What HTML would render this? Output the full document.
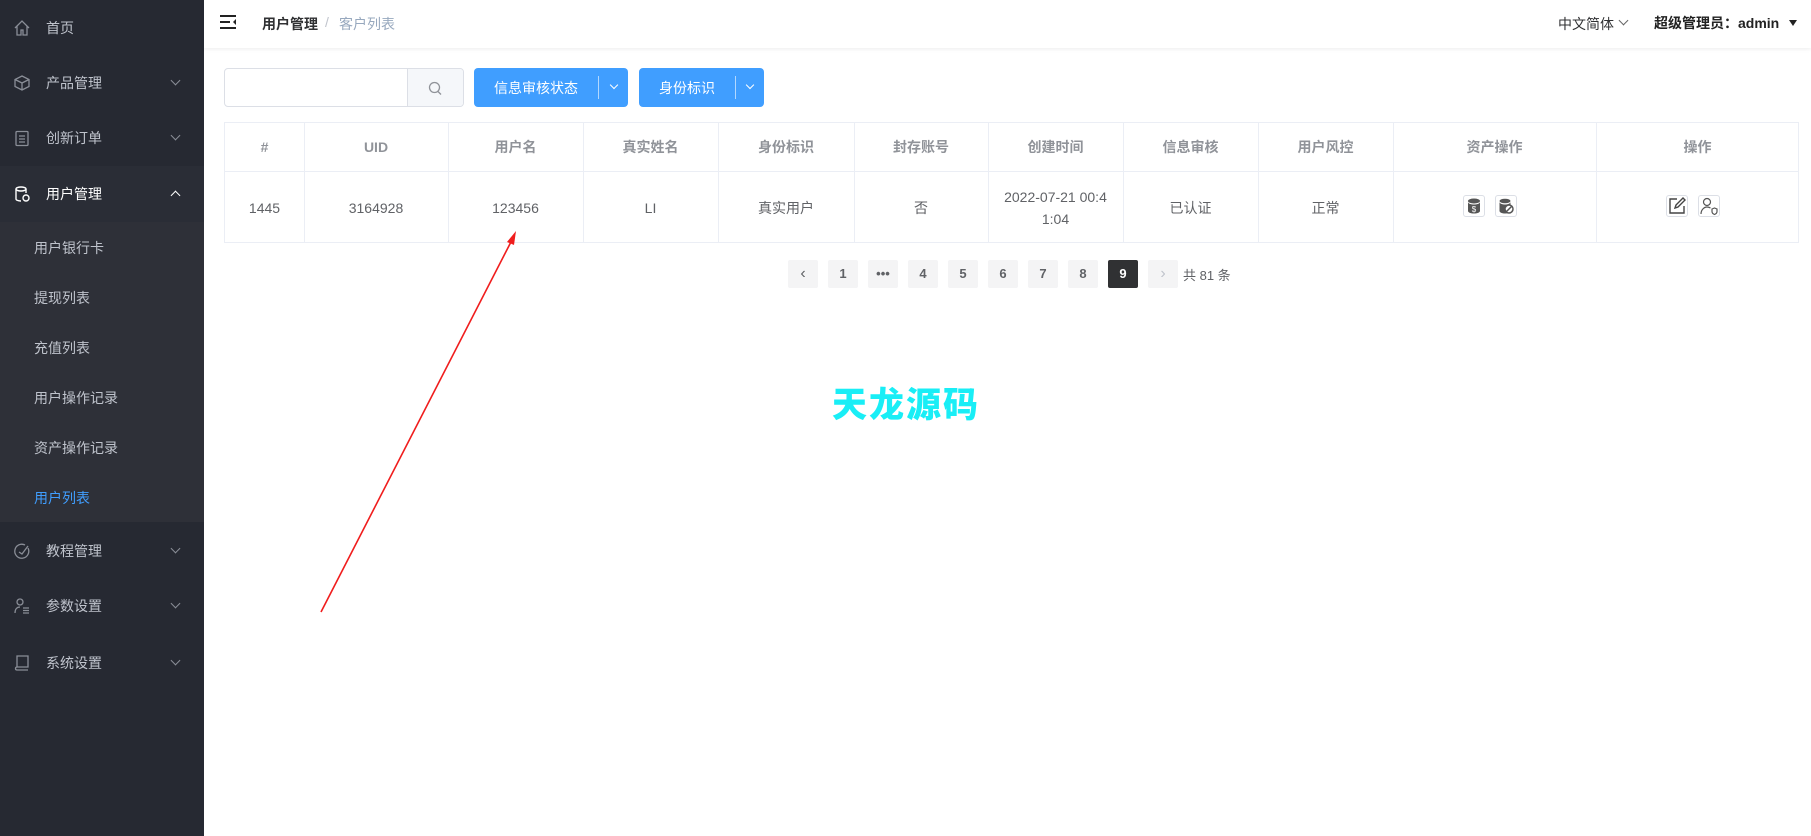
<!DOCTYPE html>
<html><head><meta charset="utf-8"><style>
*{margin:0;padding:0;box-sizing:border-box}
body{width:1811px;height:836px;overflow:hidden;background:#fff;font-family:"Liberation Sans","Noto Sans CJK SC",sans-serif;font-size:14px;color:#333;position:relative}
.side{position:absolute;left:0;top:0;width:204px;height:836px;background:#262932}
.mi{position:absolute;left:0;width:204px;height:56px;display:flex;align-items:center;color:#bfc3cc;font-size:14px}
.mi .ic{position:absolute;left:13px;top:19px;width:18px;height:18px}
.mi .t{position:absolute;left:46px}
.mi .ar{position:absolute;left:172px;top:22px;width:7px;height:7px;border-right:1px solid #8a8e97;border-bottom:1px solid #8a8e97;transform:rotate(45deg)}
.sub{position:absolute;left:0;top:222px;width:204px;height:300px;background:#2e3038}
.si{position:absolute;left:34px;color:#bfc3cc;font-size:14px}
.hdr{position:absolute;left:204px;top:0;width:1607px;height:48px;background:#fff;box-shadow:0 1px 4px rgba(0,21,41,.08)}
.ab{position:absolute}
.tbl{position:absolute;left:224px;top:122px;width:1575px;height:121px;border:1px solid #ebeef5}
.col{position:absolute;top:0;height:119px;border-left:1px solid #ebeef5}
.th,.td{position:absolute;text-align:center;font-size:14px}
.th{top:0;height:49px;line-height:49px;color:#909399;font-weight:bold}
.td{top:49px;height:71px;display:flex;align-items:center;justify-content:center;color:#606266;line-height:22px}
.hline{position:absolute;left:0;top:48px;width:1573px;border-top:1px solid #ebeef5}
.pg{position:absolute;top:260px;width:30px;height:28px;background:#f4f4f5;border-radius:2px;text-align:center;line-height:28px;font-weight:bold;font-size:13px;color:#606266}
.btn{position:absolute;top:68px;height:39px;background:#409eff;border-radius:4px;color:#fff;font-size:14px}
.iconbox{position:absolute;top:195px;width:22px;height:22px;border:1px solid #dcdfe6;border-radius:3px;background:#fff}
</style></head><body>
<div class="side">
  <div class="mi" style="top:0px"><svg class="ic" viewBox="0 0 18 18" fill="none" stroke="#8a8e97" stroke-width="1.3"><path d="M2 9L9 2l7 7M4 7v9h4v-5h2v5h4V7"/></svg><span class="t">首页</span></div>
  <div class="mi" style="top:55px"><svg class="ic" viewBox="0 0 18 18" fill="none" stroke="#8a8e97" stroke-width="1.3"><path d="M9 2l7 3.5v7L9 16l-7-3.5v-7zM2 5.5L9 9l7-3.5M9 9v7"/></svg><span class="t">产品管理</span><i class="ar"></i></div>
  <div class="mi" style="top:110px"><svg class="ic" viewBox="0 0 18 18" fill="none" stroke="#8a8e97" stroke-width="1.3"><rect x="3" y="2.5" width="12" height="14" rx="1"/><path d="M6 7h6M6 10h6M6 13h6"/></svg><span class="t">创新订单</span><i class="ar"></i></div>
  <div class="mi" style="top:166px;background:#2a2d36;color:#fff"><svg class="ic" viewBox="0 0 18 18" fill="none" stroke="#fff" stroke-width="1.4"><ellipse cx="8" cy="4" rx="5" ry="2"/><path d="M3 4v10c0 1 2 2 5 2M13 4v4"/><circle cx="13" cy="13" r="3"/></svg><span class="t">用户管理</span><i class="ar" style="transform:rotate(225deg);top:26px;border-color:#fff"></i></div>
  <div class="sub">
    <span class="si" style="top:16px">用户银行卡</span>
    <span class="si" style="top:66px">提现列表</span>
    <span class="si" style="top:116px">充值列表</span>
    <span class="si" style="top:166px">用户操作记录</span>
    <span class="si" style="top:216px">资产操作记录</span>
    <span class="si" style="top:266px;color:#409eff">用户列表</span>
  </div>
  <div class="mi" style="top:523px"><svg class="ic" viewBox="0 0 18 18" fill="none" stroke="#8a8e97" stroke-width="1.3"><path d="M15 6A7 7 0 1 1 12 3"/><path d="M6 10l3 2 6-8"/></svg><span class="t">教程管理</span><i class="ar"></i></div>
  <div class="mi" style="top:578px"><svg class="ic" viewBox="0 0 18 18" fill="none" stroke="#8a8e97" stroke-width="1.3"><circle cx="7" cy="5" r="3"/><path d="M2 16c0-4 2-6 5-6M10 11h6M10 13.5h6M10 16h6"/></svg><span class="t">参数设置</span><i class="ar"></i></div>
  <div class="mi" style="top:635px"><svg class="ic" viewBox="0 0 18 18" fill="none" stroke="#8a8e97" stroke-width="1.3"><path d="M4 2h11v11H4zM4 13c-2 0-2 3 0 3h11"/></svg><span class="t">系统设置</span><i class="ar"></i></div>
</div>

<div class="hdr">
  <svg class="ab" style="left:16px;top:15px" width="17" height="15" viewBox="0 0 17 15" fill="#222"><rect x="0" y="0" width="16" height="2"/><rect x="0" y="6" width="10" height="2"/><rect x="0" y="12" width="16" height="2"/><path d="M16 4v6l-3-3z"/></svg>
  <span class="ab" style="left:58px;top:14px;font-weight:bold;color:#303133">用户管理</span>
  <span class="ab" style="left:121px;top:14px;color:#c0c4cc">/</span>
  <span class="ab" style="left:135px;top:14px;color:#97a8be">客户列表</span>
  <span class="ab" style="left:1354px;top:14px;color:#303133">中文简体</span>
  <i class="ab" style="left:1416px;top:17px;width:7px;height:7px;border-right:1px solid #666;border-bottom:1px solid #666;transform:rotate(45deg)"></i>
  <span class="ab" style="left:1450px;top:13px;color:#222;font-weight:bold">超级管理员：admin</span>
  <i class="ab" style="left:1585px;top:20px;border-left:4px solid transparent;border-right:4px solid transparent;border-top:6px solid #222"></i>
</div>

<div class="ab" style="left:224px;top:68px;width:240px;height:39px;border:1px solid #dcdfe6;border-radius:4px;overflow:hidden">
  <div class="ab" style="left:182px;top:0;width:58px;height:39px;background:#f5f7fa;border-left:1px solid #dcdfe6"></div>
  <svg class="ab" style="left:203px;top:12px" width="14" height="15" viewBox="0 0 14 15" fill="none" stroke="#909399" stroke-width="1.3"><circle cx="6.5" cy="6.5" r="5"/><path d="M10 10.5l3 3"/></svg>
</div>
<div class="btn" style="left:474px;width:154px"><span class="ab" style="left:20px;top:10px">信息审核状态</span><i class="ab" style="left:124px;top:8px;height:23px;border-left:1px solid rgba(255,255,255,.6)"></i><i class="ab" style="left:137px;top:14px;width:6px;height:6px;border-right:1.3px solid #fff;border-bottom:1.3px solid #fff;transform:rotate(45deg)"></i></div>
<div class="btn" style="left:639px;width:125px"><span class="ab" style="left:20px;top:10px">身份标识</span><i class="ab" style="left:96px;top:8px;height:23px;border-left:1px solid rgba(255,255,255,.6)"></i><i class="ab" style="left:108px;top:14px;width:6px;height:6px;border-right:1.3px solid #fff;border-bottom:1.3px solid #fff;transform:rotate(45deg)"></i></div>

<div class="tbl">
  <div class="hline"></div>
  <div class="col" style="left:79px"></div><div class="col" style="left:223px"></div><div class="col" style="left:358px"></div><div class="col" style="left:493px"></div><div class="col" style="left:629px"></div><div class="col" style="left:763px"></div><div class="col" style="left:898px"></div><div class="col" style="left:1033px"></div><div class="col" style="left:1168px"></div><div class="col" style="left:1371px"></div>
  <div class="th" style="left:0;width:79px">#</div><div class="td" style="left:0;width:79px">1445</div>
  <div class="th" style="left:79px;width:144px">UID</div><div class="td" style="left:79px;width:144px">3164928</div>
  <div class="th" style="left:223px;width:135px">用户名</div><div class="td" style="left:223px;width:135px">123456</div>
  <div class="th" style="left:358px;width:135px">真实姓名</div><div class="td" style="left:358px;width:135px">LI</div>
  <div class="th" style="left:493px;width:136px">身份标识</div><div class="td" style="left:493px;width:136px">真实用户</div>
  <div class="th" style="left:629px;width:134px">封存账号</div><div class="td" style="left:629px;width:134px">否</div>
  <div class="th" style="left:763px;width:135px">创建时间</div><div class="td" style="left:763px;width:135px;padding:0 10px">2022-07-21 00:4<br>1:04</div>
  <div class="th" style="left:898px;width:135px">信息审核</div><div class="td" style="left:898px;width:135px">已认证</div>
  <div class="th" style="left:1033px;width:135px">用户风控</div><div class="td" style="left:1033px;width:135px">正常</div>
  <div class="th" style="left:1168px;width:203px">资产操作</div>
  <div class="th" style="left:1371px;width:203px">操作</div>
</div>
<div class="iconbox" style="left:1463px"><svg width="20" height="20" viewBox="0 0 20 20"><ellipse cx="10" cy="5" rx="6" ry="2.5" fill="#555"/><path d="M4 6v9c0 1.5 3 2.5 6 2.5s6-1 6-2.5V6c0 1.5-3 2.5-6 2.5S4 7.5 4 6z" fill="#555"/><text x="10" y="16" font-size="8" fill="#fff" text-anchor="middle" font-family="Liberation Sans">$</text></svg></div>
<div class="iconbox" style="left:1495px"><svg width="20" height="20" viewBox="0 0 20 20"><ellipse cx="9" cy="5" rx="5.5" ry="2.3" fill="#555"/><path d="M3.5 6v9c0 1.5 3 2.5 5.5 2.5s5.5-1 5.5-2.5V6c0 1.5-3 2.5-5.5 2.5S3.5 7.5 3.5 6z" fill="#555"/><circle cx="13" cy="13" r="4" fill="#fff" stroke="#555" stroke-width="1.5"/><path d="M10.5 15.5l5-5" stroke="#555" stroke-width="1.5"/></svg></div>
<div class="iconbox" style="left:1666px"><svg width="20" height="20" viewBox="0 0 20 20" fill="none" stroke="#444" stroke-width="1.4"><path d="M10 3H3v14h14v-7"/><path d="M8 12l1-3 7-7 2 2-7 7z"/></svg></div>
<div class="iconbox" style="left:1698px"><svg width="20" height="20" viewBox="0 0 20 20" fill="none" stroke="#555" stroke-width="1.2"><circle cx="8" cy="6" r="3.5"/><path d="M2 18c0-4 3-7 6-7 1.5 0 2.5.4 3.5 1"/><path d="M13 13l2.5-1 2.5 1v2.5c0 1.5-1.2 2.5-2.5 3-1.3-.5-2.5-1.5-2.5-3z"/></svg></div>

<div class="pg" style="left:788px;font-weight:normal;font-size:16px;color:#606266">‹</div>
<div class="pg" style="left:828px">1</div>
<div class="pg" style="left:868px">•••</div>
<div class="pg" style="left:908px">4</div>
<div class="pg" style="left:948px">5</div>
<div class="pg" style="left:988px">6</div>
<div class="pg" style="left:1028px">7</div>
<div class="pg" style="left:1068px">8</div>
<div class="pg" style="left:1108px;background:#303133;color:#fff">9</div>
<div class="pg" style="left:1148px;font-weight:normal;font-size:16px;color:#c0c4cc">›</div>
<span class="ab" style="left:1183px;top:265px;font-size:13px;color:#606266">共 81 条</span>

<div class="ab" style="left:832px;top:383px;font-size:35px;font-weight:900;color:#19eef6;font-family:'Noto Sans CJK SC',sans-serif;letter-spacing:2px;line-height:40px">天龙源码</div>

<svg class="ab" style="left:0;top:0" width="1811" height="836"><path d="M321 612L514 236" stroke="#f01d1d" stroke-width="1.6"/><path d="M516 231l-9 11 7 3z" fill="#f01d1d"/></svg>
</body></html>
